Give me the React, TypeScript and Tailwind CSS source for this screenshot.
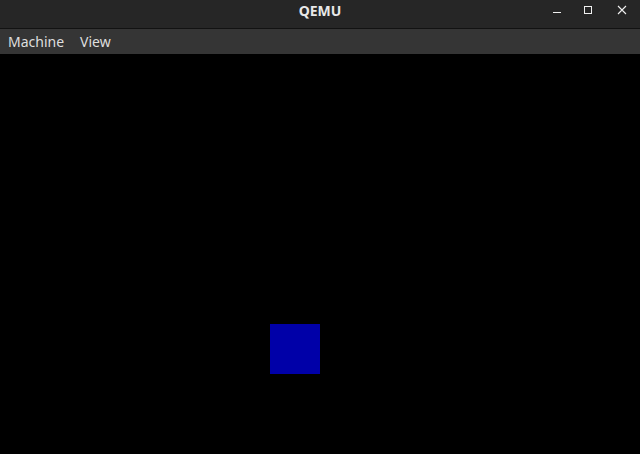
export default function App() {
  return (
    <div className="flex h-[454px] w-[640px] flex-col bg-black font-['Noto_Sans',sans-serif]">
      {/* Title bar */}
      <div className="relative flex h-[28px] items-center justify-center bg-[#262626] pb-[6px]">
        <span className="text-[14px] font-bold leading-none text-[#e8e8e8]">QEMU</span>
        <div className="absolute right-[13px] top-[5px] flex items-center">
          <svg width="10" height="10" viewBox="0 0 10 10">
            <rect x="1" y="7" width="8" height="1" fill="#f0f0f0" />
          </svg>
          <svg className="ml-[21px]" width="10" height="10" viewBox="0 0 10 10">
            <rect x="1.5" y="1.5" width="7" height="7" fill="none" stroke="#f0f0f0" strokeWidth="1" />
          </svg>
          <svg className="ml-[24px]" width="10" height="10" viewBox="0 0 10 10">
            <path d="M1 1 L9 9 M9 1 L1 9" stroke="#f0f0f0" strokeWidth="1.1" />
          </svg>
        </div>
      </div>
      <div className="h-px bg-[#121212]" />
      {/* Menu bar */}
      <div className="flex h-[25px] items-center gap-4 bg-[#353535] px-2 text-[14px] text-[#dedede]">
        <span>Machine</span>
        <span>View</span>
      </div>
      {/* Guest display */}
      <div className="relative flex-1 bg-black">
        <div className="absolute left-[270px] top-[270px] h-[50px] w-[50px] bg-[#0000a8]" />
      </div>
    </div>
  )
}
